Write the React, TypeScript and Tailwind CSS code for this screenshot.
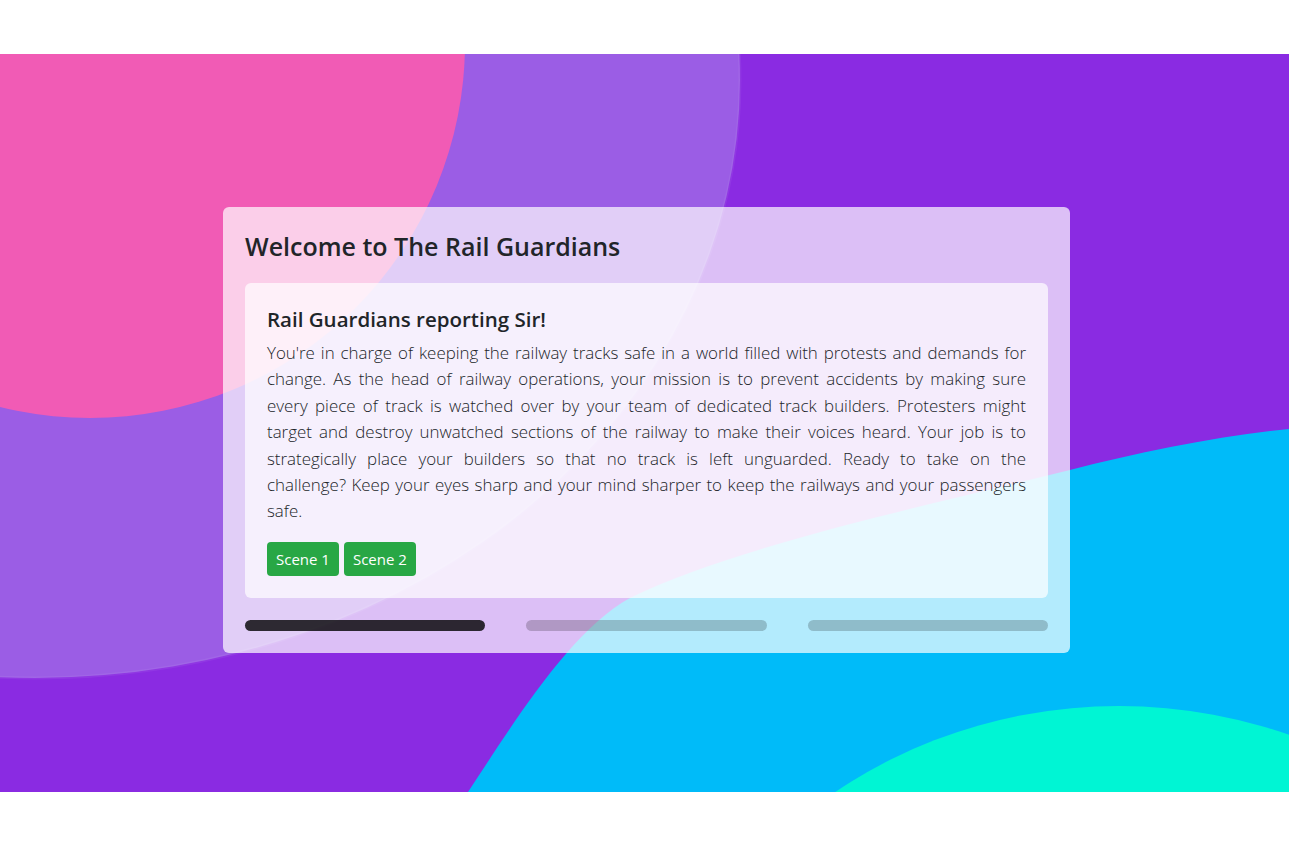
import React from 'react';

const font = { fontFamily: '"Open Sans", "Noto Sans", sans-serif' };

// line breaks as laid out in the original copy
const introLines = [
  "You're in charge of keeping the railway tracks safe in a world filled with protests and demands for",
  'change. As the head of railway operations, your mission is to prevent accidents by making sure',
  'every piece of track is watched over by your team of dedicated track builders. Protesters might',
  'target and destroy unwatched sections of the railway to make their voices heard. Your job is to',
  'strategically place your builders so that no track is left unguarded. Ready to take on the',
  'challenge? Keep your eyes sharp and your mind sharper to keep the railways and your passengers',
  'safe.',
];

const Backdrop = () => (
  <svg
    className="absolute inset-0 h-full w-full"
    viewBox="0 0 1289 738"
    preserveAspectRatio="none"
  >
    <rect width="1289" height="738" fill="#8a2be2" />
    <ellipse cx="35" cy="26" rx="705" ry="598" fill="#9b5de5" stroke="rgba(255,255,255,0.06)" strokeWidth="3" />
    <circle cx="90" cy="-11" r="375" fill="#f15bb5" />
    <path
      d="M440 790 L468 738 C 513 670, 570 577, 630 544 C 730 494, 920 453, 1070 416 C 1140 398, 1219 382, 1289 375 L 1289 790 Z"
      fill="#00bbf9"
    />
    <ellipse cx="1119" cy="1103" rx="483" ry="451" fill="#00f5d4" />
  </svg>
);

const App = () => {
  return (
    <div className="min-h-screen bg-white" style={font}>
      <div className="h-[54px]" />
      <section className="relative h-[738px] overflow-hidden">
        <Backdrop />
        <div className="relative flex justify-center pl-[4px] pt-[153px]">
          <div className="w-[847px] rounded-md bg-white/70 p-[22px]">
            <h3 className="mb-[20px] text-[25px] font-semibold leading-[34px] text-[#212529]">
              Welcome to The Rail Guardians
            </h3>

            <div className="rounded-md bg-white/70 px-[22px] pt-[24px] pb-[22px]">
              <h5 className="mb-[9px] text-[20.5px] font-semibold leading-[24px] text-[#212529]">
                Rail Guardians reporting Sir!
              </h5>
              <p className="text-[16.9px] font-light leading-[26.4px] text-[#212529]">
                {introLines.map((line, i) => (
                  <span
                    key={i}
                    className={
                      i < introLines.length - 1
                        ? 'block whitespace-nowrap text-justify [text-align-last:justify]'
                        : 'block'
                    }
                  >
                    {line}
                  </span>
                ))}
              </p>
              <div className="mt-[17px] flex gap-[5px]">
                <button className="h-[34px] rounded-[4px] bg-[#28a745] px-[9px] text-[15px] text-white">
                  Scene 1
                </button>
                <button className="h-[34px] rounded-[4px] bg-[#28a745] px-[9px] text-[15px] text-white">
                  Scene 2
                </button>
              </div>
            </div>

            <div className="mt-[22px] flex gap-[41px]">
              <div className="h-[11px] flex-1 rounded-full bg-black/80" />
              <div className="h-[11px] flex-1 rounded-full bg-black/20" />
              <div className="h-[11px] flex-1 rounded-full bg-black/20" />
            </div>
          </div>
        </div>
      </section>
    </div>
  );
};

export default App;
